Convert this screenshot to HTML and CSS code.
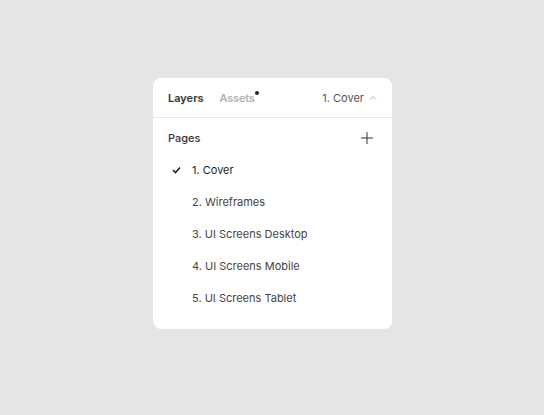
FILE: index.html
```html
<!DOCTYPE html>
<html lang="en">
<head>
    <meta charset="UTF-8">
    <meta name="viewport" content="width=device-width, initial-scale=1.0">
    <title>Pages</title>
    <link rel="stylesheet" href="styles.css">
</head>
<body>
    <div class="panel">
        <div class="panel-header">
            <div class="tabs">
                <span class="tab active">Layers</span>
                <span class="tab muted">Assets<span class="dot"></span></span>
            </div>
            <div class="page-select">
                1. Cover
                <svg class="chevron" width="8" height="5" viewBox="0 0 8 5">
                    <path d="M1 4.5 L4 1.5 L7 4.5" fill="none" stroke="#b3b3b3" stroke-width="1"/>
                </svg>
            </div>
        </div>

        <div class="pages">
            <div class="pages-title">
                <span>Pages</span>
                <svg class="plus" width="12" height="12" viewBox="0 0 12 12">
                    <path d="M6 0 V12 M0 6 H12" stroke="#333" stroke-width="1"/>
                </svg>
            </div>
            <ul class="page-list">
                <li class="page current">
                    <svg class="check" width="9" height="8" viewBox="0 0 9 8">
                        <path d="M1 4 L3.5 6.5 L8 1.5" fill="none" stroke="#222" stroke-width="1.6"/>
                    </svg>
                    1. Cover
                </li>
                <li class="page">2. Wireframes</li>
                <li class="page">3. UI Screens Desktop</li>
                <li class="page">4. UI Screens Mobile</li>
                <li class="page">5. UI Screens Tablet</li>
            </ul>
        </div>
    </div>
</body>
</html>
```

FILE: styles.css
```css
* {
    margin: 0;
    padding: 0;
    box-sizing: border-box;
}

body {
    font-family: Inter, 'Noto Sans', sans-serif;
    font-size: 11px;
    background: #e5e5e5;
    width: 544px;
    height: 415px;
    display: flex;
    align-items: flex-start;
    justify-content: flex-start;
    padding: 78px 0 0 153px;
    color: #333;
}

.panel {
    width: 239px;
    height: 251px;
    background: #fff;
    border-radius: 8px;
}

.panel-header {
    height: 40px;
    display: flex;
    align-items: center;
    justify-content: space-between;
    padding: 0 15px 0 15px;
    border-bottom: 1px solid #e6e6e6;
}

.tabs {
    display: flex;
    gap: 16px;
}

.tab {
    font-weight: 600;
    position: relative;
}

.tab.active {
    color: #333;
}

.tab.muted {
    color: #b3b3b3;
    letter-spacing: -0.2px;
}

.dot {
    position: absolute;
    top: 0;
    right: -4px;
    width: 4px;
    height: 4px;
    border-radius: 50%;
    background: #222;
}

.page-select {
    display: flex;
    align-items: center;
    gap: 5px;
    color: #555;
}

.chevron {
    margin-top: -1px;
}

.pages {
    padding: 8px 0 15px;
}

.pages-title {
    height: 24px;
    display: flex;
    align-items: center;
    justify-content: space-between;
    padding: 0 19px 0 15px;
    font-weight: 500;
}

.page-list {
    list-style: none;
    margin-top: 4px;
}

.page {
    height: 32px;
    display: flex;
    align-items: center;
    padding-left: 39px;
    position: relative;
    color: #444;
}

.page.current {
    color: #222;
}

.check {
    position: absolute;
    left: 19px;
    top: 12px;
}
```
